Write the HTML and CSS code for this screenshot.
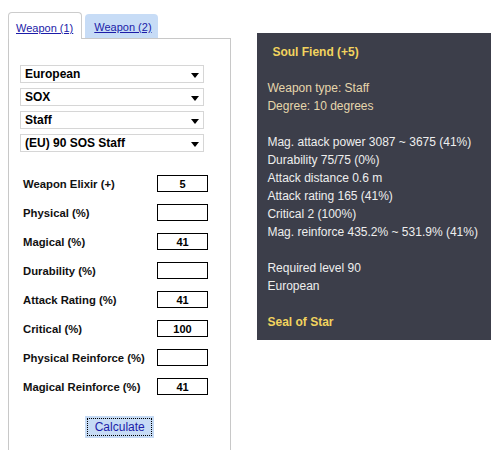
FILE: index.html
```html
<!DOCTYPE html>
<html lang="en">
<head>
    <meta charset="utf-8">
    <title>Weapon Calculator</title>
    <link rel="stylesheet" href="styles.css">
</head>
<body>
<div class="wrapper">
    <div class="calc">
        <div class="tabs">
            <div class="tab active"><a href="#">Weapon (1)</a></div>
            <div class="tab"><a href="#">Weapon (2)</a></div>
        </div>
        <div class="panel">
            <div class="selects">
                <div class="select"><span>European</span><svg width="8" height="5" viewBox="0 0 8 5"><path d="M0 0h8L4 5z"/></svg></div>
                <div class="select"><span>SOX</span><svg width="8" height="5" viewBox="0 0 8 5"><path d="M0 0h8L4 5z"/></svg></div>
                <div class="select"><span>Staff</span><svg width="8" height="5" viewBox="0 0 8 5"><path d="M0 0h8L4 5z"/></svg></div>
                <div class="select"><span>(EU) 90 SOS Staff</span><svg width="8" height="5" viewBox="0 0 8 5"><path d="M0 0h8L4 5z"/></svg></div>
            </div>
            <div class="fields">
                <div class="field"><label>Weapon Elixir (+)</label><input type="text" value="5"></div>
                <div class="field"><label>Physical (%)</label><input type="text" value=""></div>
                <div class="field"><label>Magical (%)</label><input type="text" value="41"></div>
                <div class="field"><label>Durability (%)</label><input type="text" value=""></div>
                <div class="field"><label>Attack Rating (%)</label><input type="text" value="41"></div>
                <div class="field"><label>Critical (%)</label><input type="text" value="100"></div>
                <div class="field"><label>Physical Reinforce (%)</label><input type="text" value=""></div>
                <div class="field"><label>Magical Reinforce (%)</label><input type="text" value="41"></div>
            </div>
            <div class="actions">
                <button class="calcButton">Calculate</button>
            </div>
        </div>
    </div>
    <div class="tooltip">
        <div class="title">Soul Fiend (+5)</div>
        <div class="gap"></div>
        <div class="info">Weapon type: Staff</div>
        <div class="info">Degree: 10 degrees</div>
        <div class="gap"></div>
        <div>Mag. attack power 3087 ~ 3675 (41%)</div>
        <div>Durability 75/75 (0%)</div>
        <div>Attack distance 0.6 m</div>
        <div>Attack rating 165 (41%)</div>
        <div>Critical 2 (100%)</div>
        <div>Mag. reinforce 435.2% ~ 531.9% (41%)</div>
        <div class="gap"></div>
        <div>Required level 90</div>
        <div>European</div>
        <div class="gap"></div>
        <div class="set">Seal of Star</div>
    </div>
</div>
</body>
</html>
```

FILE: styles.css
```css
body{
    margin: 8px;
    background: #fff;
    font-family: "Liberation Sans", Arial, sans-serif;
    font-size: 12px;
    color: #000;
}
.wrapper{
    display: flex;
    align-items: flex-start;
    padding-top: 4px;
}
.calc{
    width: 226px;
}
.tabs{
    display: flex;
    align-items: flex-end;
    gap: 3px;
    height: 26px;
}
.tab{
    height: 24px;
    padding: 0 6px 0 9px;
    background: #c7dcf6;
    border-radius: 4px 4px 0 0;
    line-height: 26px;
    white-space: nowrap;
}
.tab a{
    color: #1c1ca8;
    font-size: 11px;
}
.tab.active{
    height: 26px;
    padding: 0 8px 0 7px;
    background: #fff;
    border: 1px solid #ccc;
    border-bottom: none;
    margin-bottom: -1px;
    position: relative;
    z-index: 1;
    line-height: 30px;
}
.panel{
    border: 1px solid #c8c8c8;
    border-bottom: none;
    padding: 26px 0 20px 11px;
}
.selects{
    display: flex;
    flex-direction: column;
    gap: 5px;
}
.select{
    width: 184px;
    height: 18px;
    box-sizing: border-box;
    border: 1px solid #d6d6d6;
    display: flex;
    align-items: center;
    justify-content: space-between;
    padding: 0 4px 0 4px;
    font-weight: bold;
    font-size: 12px;
}
.select svg{
    margin-top: 2px;
}
.fields{
    margin-top: 23px;
    padding-left: 3px;
}
.field{
    display: flex;
    align-items: center;
    justify-content: space-between;
    width: 185px;
    height: 17px;
    margin-bottom: 12px;
}
.field label{
    font-weight: bold;
    font-size: 11.3px;
    color: #111;
}
.field input{
    width: 51px;
    height: 17px;
    box-sizing: border-box;
    border: 1px solid #000;
    padding: 0;
    text-align: center;
    font-family: "Liberation Sans", Arial, sans-serif;
    font-size: 11px;
    font-weight: bold;
}
.actions{
    display: flex;
    justify-content: center;
    padding-right: 11px;
    margin-top: 21px;
}
.calcButton{
    width: 69px;
    height: 22px;
    background: #c6dbf5;
    border: none;
    outline: 1px dotted #000;
    outline-offset: -3px;
    color: #1c1ca8;
    font-family: "Liberation Sans", Arial, sans-serif;
    font-size: 12px;
    padding: 0;
}
.tooltip{
    margin-top: 21px;
    margin-left: 26px;
    width: 236px;
    box-sizing: border-box;
    background: #3c3e4a;
    color: #eeeeee;
    padding: 10px 8px 9px 10px;
    line-height: 18px;
    font-size: 12px;
}
.tooltip .title{
    color: #f2d35e;
    font-weight: bold;
    padding-left: 5px;
}
.tooltip .gap{
    height: 18px;
}
.tooltip .info{
    color: #e6d6ac;
}
.tooltip .set{
    color: #f2d35e;
    font-weight: bold;
}
```
